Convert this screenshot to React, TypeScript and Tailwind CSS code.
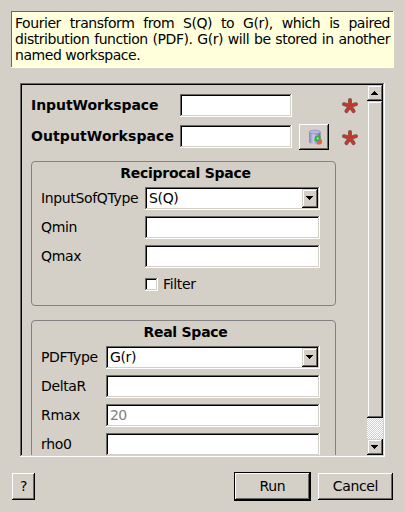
import type { ReactNode } from 'react';

const sunken =
  'shadow-[inset_-1px_-1px_#fff,inset_1px_1px_#6a6863,inset_-2px_-2px_#d4d0c8,inset_2px_2px_#000]';
const raised =
  'shadow-[inset_-1px_-1px_#000,inset_1px_1px_#fff,inset_-2px_-2px_#6a6863]';
const raisedSoft =
  'shadow-[inset_-1px_-1px_#000,inset_1px_1px_#d4d0c8,inset_-2px_-2px_#6a6863,inset_2px_2px_#fff]';

function Arrow({ up = false }: { up?: boolean }) {
  return (
    <svg width="7" height="4" viewBox="0 0 7 4" shapeRendering="crispEdges" className={up ? 'rotate-180' : ''}>
      <path d="M0 0h7v1h-1v1h-1v1h-1v1h-1v-1h-1v-1h-1v-1h-1z" fill="#000" />
    </svg>
  );
}

function Field({ value = '', className = '' }: { value?: string; className?: string }) {
  return (
    <div className={`h-[23px] bg-white pl-1 leading-[23px] tracking-[-0.6px] text-[#808080] ${sunken} ${className}`}>{value}</div>
  );
}

function Combo({ value }: { value: string }) {
  return (
    <div className={`flex h-[23px] justify-between bg-white p-[2px] ${sunken}`}>
      <span className="pl-[2px] leading-[19px]">{value}</span>
      <div className={`flex h-[19px] w-4 items-center justify-center bg-[#d4d0c8] pr-px pb-px ${raisedSoft}`}>
        <Arrow />
      </div>
    </div>
  );
}

function Row({ label, labelWidth, children }: { label: string; labelWidth: string; children: ReactNode }) {
  return (
    <div className="flex h-[23px]">
      <span className={`shrink-0 leading-[23px] whitespace-nowrap ${labelWidth}`}>{label}</span>
      <div className="flex-1">{children}</div>
    </div>
  );
}

function Group({ title, height, children }: { title: string; height: string; children: ReactNode }) {
  return (
    <section className={`w-[305px] shrink-0 rounded-[4px] border border-[#848280] pr-[15px] pl-[9px] ${height}`}>
      <h2 className="h-[25px] pl-[10px] text-center leading-[23px] font-bold tracking-[-0.25px]">{title}</h2>
      <div className="flex flex-col gap-[6px]">{children}</div>
    </section>
  );
}

function Required() {
  const arms = 'M9 9V3M9 9L3 7.200M9 9L15 7.200M9 9L5.400 14.200M9 9L12.600 14.200';
  return (
    <svg width="18" height="18" viewBox="0 0 18 18">
      <g fill="none" strokeLinecap="round">
        <path d={arms} stroke="#85574d" strokeWidth="4" />
        <path d={arms} stroke="#bd3b2d" strokeWidth="2.5" />
      </g>
    </svg>
  );
}

function DatabaseIcon() {
  return (
    <svg width="16" height="16" viewBox="0 0 16 16">
      <defs>
        <linearGradient id="cylinder">
          <stop offset="0" stopColor="#8585b8" />
          <stop offset=".4" stopColor="#c9c9f0" />
          <stop offset="1" stopColor="#66669b" />
        </linearGradient>
      </defs>
      <path d="M2 3v10c0 2.500 11.500 2.500 11.500 0V3z" fill="url(#cylinder)" />
      <ellipse cx="7.750" cy="3" rx="5.750" ry="1.800" fill="#b9b9e3" stroke="#8989bb" strokeWidth=".7" />
      <path d="M7.500 12.500V9q0-2 2-2h4v4h-3v1.500z" fill="#32b43b" />
      <path d="M9.800 8.700h1.700v1.500h-1.700z" fill="#c9f0c7" />
      <path d="M15 10.500v3q0 2-2 2H10v-3h2.500v-2z" fill="#f0623a" />
    </svg>
  );
}

function PushButton({ label, className }: { label: string; className: string }) {
  return <button className={`h-[27px] bg-[#d4d0c8] ${raised} ${className}`}>{label}</button>;
}

export default function App() {
  return (
    <main className="h-[512px] w-[405px] overflow-hidden bg-[#d4d0c8] pt-[11px] font-['DejaVu_Sans','Noto_Sans',sans-serif] text-[14px] tracking-[-0.35px] text-black">
      <div className="ml-[11px] h-[57px] w-[383px] bg-[#ffffdc] pt-[4px] pr-[4px] pl-[4px] leading-4 tracking-[-0.45px] shadow-[inset_-1px_-1px_#fff,inset_1px_1px_#6a6863]">
        <div className="[text-align-last:justify] whitespace-nowrap">Fourier transform from S(Q) to G(r), which is paired</div>
        <div className="[text-align-last:justify] whitespace-nowrap">distribution function (PDF). G(r) will be stored in another</div>
        <div>named workspace.</div>
      </div>

      <div className="mt-[15px] ml-5 flex h-[374px] w-[365px] p-[2px] shadow-[inset_-1px_-1px_#fff,inset_1px_1px_#6a6863,inset_-2px_-2px_#d4d0c8,inset_2px_2px_#000]">
        <div className="flex h-[370px] w-[345px] flex-col overflow-hidden pl-[9px]">
          <div className="mt-[9px] flex h-[23px] shrink-0 items-center">
            <span className="w-[149px] leading-[23px] font-bold tracking-[-0.05px]">InputWorkspace</span>
            <Field className="w-[112px]" />
            <div className="ml-[49px]"><Required /></div>
          </div>
          <div className="mt-[7px] flex h-[26px] shrink-0 items-start">
            <span className="mt-px w-[149px] leading-[23px] font-bold tracking-[0.1px]">OutputWorkspace</span>
            <Field className="mt-px w-[112px]" />
            <button className={`ml-[7px] flex h-[26px] w-[30px] items-center justify-center pl-px ${raised}`}>
              <DatabaseIcon />
            </button>
            <div className="mt-[5px] ml-[12px]"><Required /></div>
          </div>
          <div className="mt-[11px] flex flex-col gap-[14px]">
            <Group title="Reciprocal Space" height="h-[145px]">
              <Row label="InputSofQType" labelWidth="w-[104px]"><Combo value="S(Q)" /></Row>
              <Row label="Qmin" labelWidth="w-[104px]"><Field /></Row>
              <Row label="Qmax" labelWidth="w-[104px]"><Field /></Row>
              <div className="ml-[104px] flex h-[21px] items-center gap-[5px]">
                <span className={`size-[13px] bg-white ${sunken}`} />
                <span>Filter</span>
              </div>
            </Group>
            <Group title="Real Space" height="h-[160px]">
              <Row label="PDFType" labelWidth="w-[65px]"><Combo value="G(r)" /></Row>
              <Row label="DeltaR" labelWidth="w-[65px]"><Field /></Row>
              <Row label="Rmax" labelWidth="w-[65px]"><Field value="20" /></Row>
              <Row label="rho0" labelWidth="w-[65px]"><Field /></Row>
            </Group>
          </div>
        </div>

        <div className="flex w-4 flex-col bg-[#d4d0c8]">
          <div className={`flex h-4 items-center justify-center pr-px ${raisedSoft}`}><Arrow up /></div>
          <div className={`h-[317px] ${raisedSoft}`} />
          <div className="h-[21px] bg-[repeating-conic-gradient(#fff_0_25%,#d4d0c8_0_50%)] bg-[length:2px_2px]" />
          <div className={`flex h-4 items-center justify-center pr-px ${raisedSoft}`}><Arrow /></div>
        </div>
      </div>

      <div className="mt-[15px] ml-3 flex h-[29px] items-center">
        <PushButton label="?" className="w-[23px]" />
        <div className="ml-[199px] bg-black p-px">
          <PushButton label="Run" className="block w-[75px]" />
        </div>
        <PushButton label="Cancel" className="ml-[7px] w-[75px]" />
      </div>
    </main>
  );
}
